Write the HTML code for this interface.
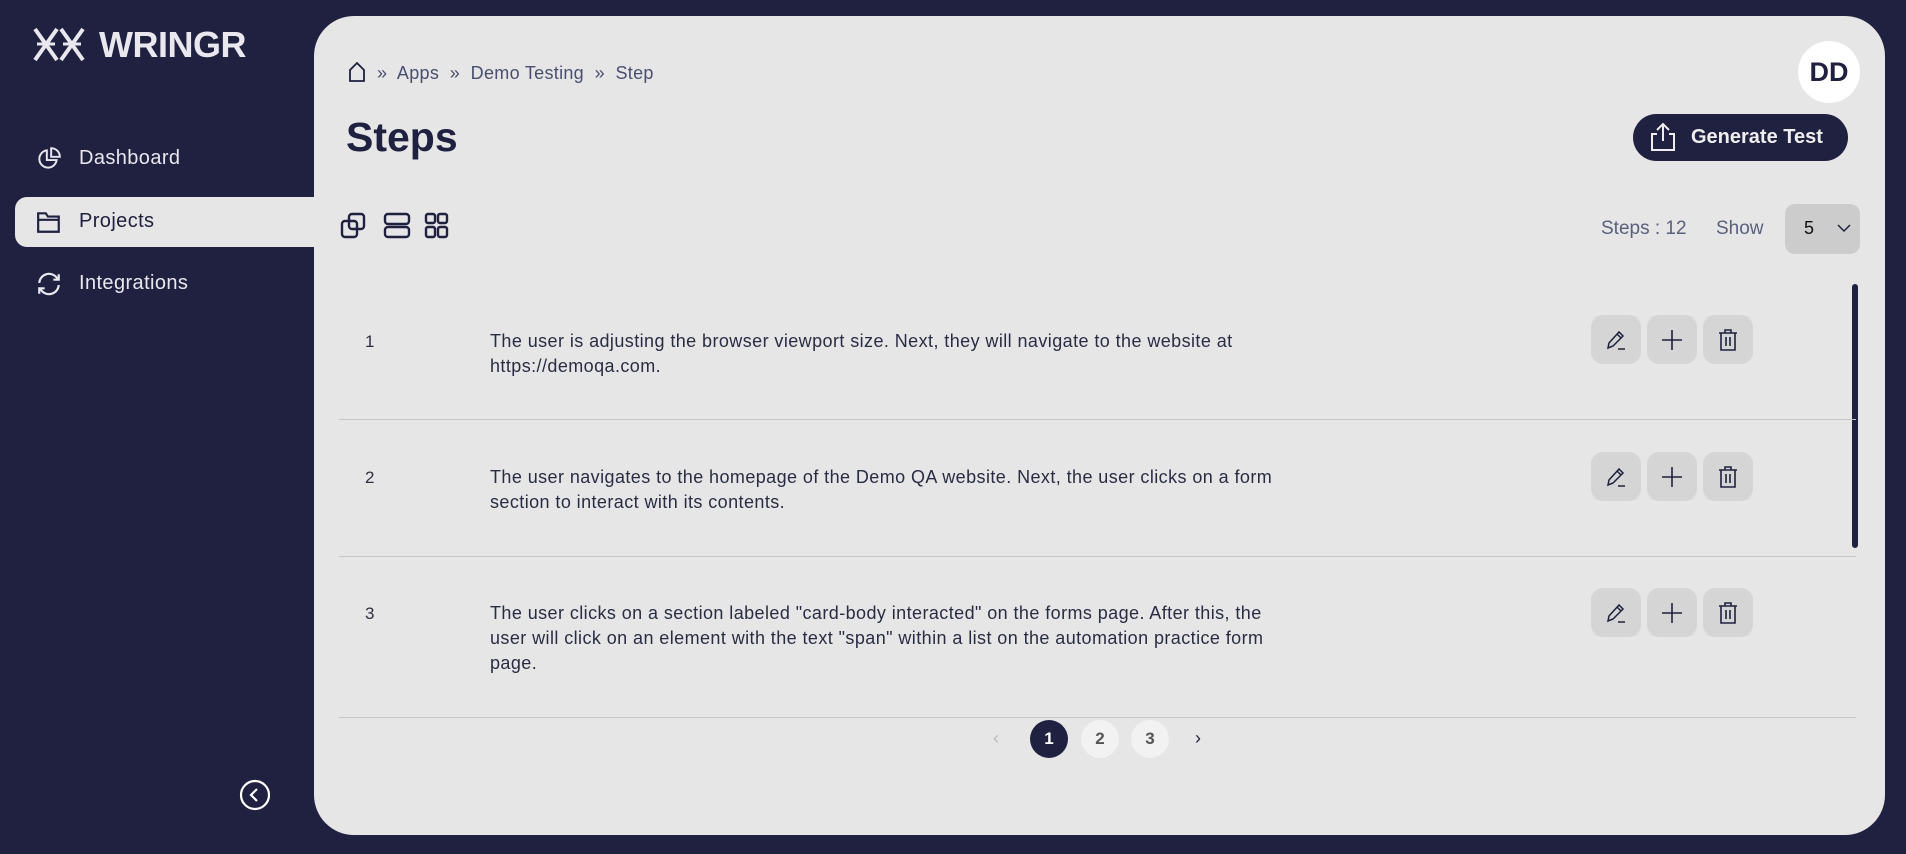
<!DOCTYPE html>
<html><head><meta charset="utf-8"><style>
*{box-sizing:border-box;margin:0;padding:0}
body{width:1906px;height:854px;background:#202040;font-family:"Liberation Sans",sans-serif;position:relative;overflow:hidden;color:#202040}
.abs{position:absolute}
.panel{left:314px;top:16px;width:1571px;height:819px;background:#e6e6e6;border-radius:40px}
.nav{left:79px;color:#e8e8ee;font-size:20px;letter-spacing:0.4px}
.sel{left:15px;top:197px;width:300px;height:50px;background:#e6e6e6;border-radius:12px 0 0 12px}
.bc{top:63px;font-size:18px;color:#4a4e70;letter-spacing:0.3px}
.row{left:339px;width:1517px;border-bottom:1.5px solid #c4c6cc}
.num{left:365px;font-size:17px;color:#303040}
.txt{left:490px;font-size:18px;line-height:25px;color:#2a2c44;letter-spacing:0.42px}
.btn{width:50px;height:49px;background:#d5d5d5;border-radius:12px;display:flex;align-items:center;justify-content:center}
.pg{width:38px;height:38px;border-radius:50%;display:flex;align-items:center;justify-content:center;font-size:17px;font-weight:bold;top:720px}
</style></head><body>
<svg class="abs" style="left:33px;top:26px" width="52" height="37" viewBox="0 0 52 37" fill="none" stroke="#e8e8ee" stroke-width="4">
<path d="M2 3 L24 34 M24 3 L2 34 M28 3 L50 34 M50 3 L28 34"/><path d="M4 18h18M30 18h18" stroke-width="3"/></svg>
<div class="abs" style="left:99px;top:24px;font-size:36px;font-weight:bold;color:#e8e8ee;letter-spacing:-0.5px">WRINGR</div>
<div class="abs sel"></div>
<svg class="abs" style="left:36px;top:146px" width="26" height="26" viewBox="0 0 24 24" fill="none" stroke="#e8e8ee" stroke-width="1.8"><path d="M10 4a8 8 0 1 0 9 9h-9z"/><path d="M14 2v8h8a8 8 0 0 0-8-8z"/></svg>
<div class="abs nav" style="top:147px">Dashboard</div>
<svg class="abs" style="left:36px;top:209px" width="26" height="26" viewBox="0 0 24 24" fill="none" stroke="#202040" stroke-width="2"><path d="M2 4h7l2 3h10v14H2z"/><path d="M2 10h19"/></svg>
<div class="abs nav" style="top:210px;color:#202040">Projects</div>
<svg class="abs" style="left:36px;top:271px" width="26" height="26" viewBox="0 0 24 24" fill="none" stroke="#e8e8ee" stroke-width="2"><path d="M3 11a9 9 0 0 1 16-5l2 2M21 3v5h-5M21 13a9 9 0 0 1-16 5l-2-2M3 21v-5h5"/></svg>
<div class="abs nav" style="top:272px">Integrations</div>
<svg class="abs" style="left:239px;top:779px" width="32" height="32" viewBox="0 0 32 32" fill="none" stroke="#fff" stroke-width="2.2"><circle cx="16" cy="16" r="14"/><path d="M18 10l-6 6 6 6"/></svg>

<div class="abs panel"></div>
<svg class="abs" style="left:348px;top:61px" width="18" height="22" viewBox="0 0 18 22" fill="none" stroke="#202040" stroke-width="1.8"><path d="M2 20V9l7-7 7 7v11z"/></svg>
<div class="abs bc" style="left:377px">»&nbsp; Apps &nbsp;»&nbsp; Demo Testing &nbsp;»&nbsp; Step</div>
<div class="abs" style="left:346px;top:114px;font-size:41px;font-weight:bold;color:#202040">Steps</div>
<div class="abs" style="left:1798px;top:41px;width:62px;height:62px;border-radius:50%;background:#fff;display:flex;align-items:center;justify-content:center;font-size:27px;font-weight:bold;color:#202040">DD</div>
<div class="abs" style="left:1633px;top:114px;width:215px;height:47px;border-radius:24px;background:#202040;color:#eee;font-size:20px;font-weight:bold;display:flex;align-items:center;padding-left:58px">Generate Test</div>
<svg class="abs" style="left:1648px;top:121px" width="30" height="32" viewBox="0 0 30 32" fill="none" stroke="#eee" stroke-width="2"><path d="M9 13H4v16h22V13h-5M15 3v17M9 9l6-6 6 6"/></svg>
<svg class="abs" style="left:340px;top:211px" width="120" height="29" viewBox="0 0 120 29" fill="none" stroke="#202040" stroke-width="2.4"><rect x="2" y="10" width="15" height="16" rx="3"/><rect x="9" y="3" width="15" height="15" rx="3"/><rect x="45" y="3" width="24" height="10" rx="3"/><rect x="45" y="16" width="24" height="10" rx="3"/><rect x="86" y="3" width="9" height="9" rx="2"/><rect x="98" y="3" width="9" height="9" rx="2"/><rect x="86" y="16" width="9" height="10" rx="2"/><rect x="98" y="16" width="9" height="10" rx="2"/></svg>
<div class="abs" style="left:1601px;top:218px;font-size:19px;color:#5a607c">Steps : 12</div>
<div class="abs" style="left:1716px;top:218px;font-size:19px;color:#5a607c">Show</div>
<div class="abs" style="left:1785px;top:204px;width:75px;height:50px;background:#cccccc;border-radius:10px"></div>
<div class="abs" style="left:1804px;top:218px;font-size:18px;color:#111">5</div>
<svg class="abs" style="left:1837px;top:224px" width="14" height="9" viewBox="0 0 14 9" fill="none" stroke="#202040" stroke-width="1.5"><path d="M1 1l6 6 6-6"/></svg>
<div class="abs" style="left:1852px;top:284px;width:6px;height:264px;background:#202040;border-radius:3px"></div>
<div class="abs row" style="top:286px;height:134px"></div>
<div class="abs row" style="top:420px;height:137px"></div>
<div class="abs row" style="top:557px;height:161px"></div>
<div class="abs num" style="top:332px">1</div>
<div class="abs txt" style="top:329px">The user is adjusting the browser viewport size. Next, they will navigate to the website at<br>https://demoqa.com.</div>
<div class="abs num" style="top:468px">2</div>
<div class="abs txt" style="top:465px">The user navigates to the homepage of the Demo QA website. Next, the user clicks on a form<br>section to interact with its contents.</div>
<div class="abs num" style="top:604px">3</div>
<div class="abs txt" style="top:601px">The user clicks on a section labeled "card-body interacted" on the forms page. After this, the<br>user will click on an element with the text "span" within a list on the automation practice form<br>page.</div>
<div class="abs" style="left:1591px;top:315px;display:flex;gap:6px">
<div class="btn"><svg width="24" height="24" viewBox="0 0 24 24" fill="none" stroke="#202040" stroke-width="1.5"><path d="M4 20l1-5L15 4l4 4L9 18zM13 6l4 4M14 21h7"/></svg></div>
<div class="btn"><svg width="24" height="24" viewBox="0 0 24 24" fill="none" stroke="#202040" stroke-width="1.6"><path d="M12 2v20M2 12h20"/></svg></div>
<div class="btn"><svg width="24" height="24" viewBox="0 0 24 24" fill="none" stroke="#202040" stroke-width="1.6"><path d="M3 5h18M9 5V2h6v3M5 5v17h14V5M10 9v9M14 9v9"/></svg></div></div>
<div class="abs" style="left:1591px;top:452px;display:flex;gap:6px">
<div class="btn"><svg width="24" height="24" viewBox="0 0 24 24" fill="none" stroke="#202040" stroke-width="1.5"><path d="M4 20l1-5L15 4l4 4L9 18zM13 6l4 4M14 21h7"/></svg></div>
<div class="btn"><svg width="24" height="24" viewBox="0 0 24 24" fill="none" stroke="#202040" stroke-width="1.6"><path d="M12 2v20M2 12h20"/></svg></div>
<div class="btn"><svg width="24" height="24" viewBox="0 0 24 24" fill="none" stroke="#202040" stroke-width="1.6"><path d="M3 5h18M9 5V2h6v3M5 5v17h14V5M10 9v9M14 9v9"/></svg></div></div>
<div class="abs" style="left:1591px;top:588px;display:flex;gap:6px">
<div class="btn"><svg width="24" height="24" viewBox="0 0 24 24" fill="none" stroke="#202040" stroke-width="1.5"><path d="M4 20l1-5L15 4l4 4L9 18zM13 6l4 4M14 21h7"/></svg></div>
<div class="btn"><svg width="24" height="24" viewBox="0 0 24 24" fill="none" stroke="#202040" stroke-width="1.6"><path d="M12 2v20M2 12h20"/></svg></div>
<div class="btn"><svg width="24" height="24" viewBox="0 0 24 24" fill="none" stroke="#202040" stroke-width="1.6"><path d="M3 5h18M9 5V2h6v3M5 5v17h14V5M10 9v9M14 9v9"/></svg></div></div>
<div class="abs" style="left:993px;top:728px;color:#bbb;font-size:18px">‹</div>
<div class="abs pg" style="left:1030px;background:#202040;color:#fff">1</div>
<div class="abs pg" style="left:1081px;background:#f2f2f2;color:#555">2</div>
<div class="abs pg" style="left:1131px;background:#f2f2f2;color:#555">3</div>
<div class="abs" style="left:1195px;top:728px;color:#202040;font-size:18px">›</div>
</body></html>
